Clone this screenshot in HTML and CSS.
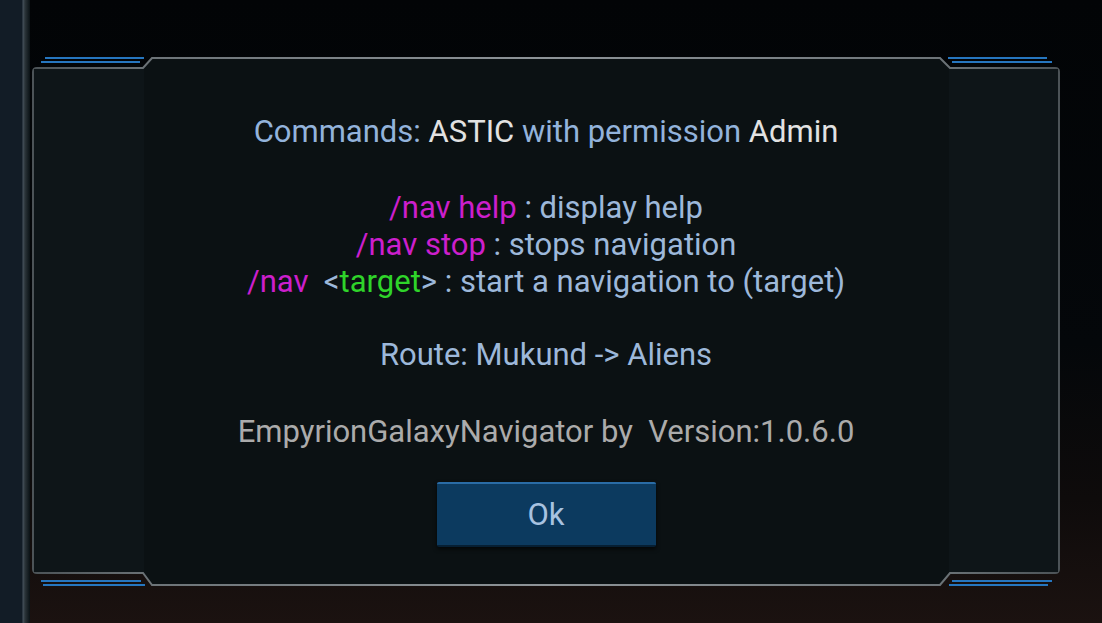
FILE: index.html
```html
<!DOCTYPE html>
<html lang="en">
<head>
  <meta charset="UTF-8">
  <title>Galaxy Navigator</title>
  <link rel="stylesheet" href="styles.css">
</head>
<body>

<div class="rail"></div>

<div class="stage">
  <div class="panel">
    <svg class="frame" width="1028" height="531" viewBox="0 0 1028 531">
      <defs>
        <linearGradient id="edge" x1="0" y1="0" x2="1" y2="0">
          <stop offset="0" stop-color="#4c5357"/>
          <stop offset="0.12" stop-color="#6d7478"/>
          <stop offset="0.5" stop-color="#8e9498"/>
          <stop offset="0.88" stop-color="#6d7478"/>
          <stop offset="1" stop-color="#4c5357"/>
        </linearGradient>
      </defs>
      <!-- body of the window -->
      <path d="M1,16 Q1,12 5,12 L111,12 L120,2 L908,2 L918,12 L1023,12 Q1027,12 1027,16 L1027,513 Q1027,517 1023,517 L918,517 L908,529 L120,529 L111,517 L5,517 Q1,517 1,513 Z"
            fill="#0b1113" stroke="url(#edge)" stroke-width="2"/>
      <!-- wings, a touch lighter -->
      <rect x="2" y="13" width="110" height="503" fill="#0e1518"/>
      <rect x="917" y="13" width="109" height="503" fill="#0e1518"/>
      <!-- blue trims -->
      <g stroke="#2676bf" stroke-width="2">
        <line x1="13" y1="2" x2="112" y2="2"/>
        <line x1="9" y1="6" x2="108" y2="6"/>
        <line x1="916" y1="2" x2="1015" y2="2"/>
        <line x1="920" y1="6" x2="1020" y2="6"/>
        <line x1="9" y1="525" x2="109" y2="525"/>
        <line x1="11" y1="529" x2="113" y2="529"/>
        <line x1="920" y1="525" x2="1020" y2="525"/>
        <line x1="917" y1="529" x2="1016" y2="529"/>
      </g>
    </svg>

    <div class="content">
      <p class="title"><span class="blue">Commands:</span> ASTIC <span class="blue">with permission</span> Admin</p>

      <div class="cmds">
        <p><span class="cmd">/nav help</span> : display help</p>
        <p><span class="cmd">/nav stop</span> : stops navigation</p>
        <p><span class="cmd">/nav</span>&nbsp;&nbsp;&lt;<span class="arg">target</span>&gt; : start a navigation to (target)</p>
      </div>

      <p class="route">Route: Mukund -&gt; Aliens</p>

      <p class="version">EmpyrionGalaxyNavigator by&nbsp; Version:1.0.6.0</p>

      <button class="ok">Ok</button>
    </div>
  </div>
</div>

</body>
</html>
```

FILE: styles.css
```css
html, body { height: 100%; }
body {
  margin: 0;
  display: flex;
  overflow: hidden;
  font-family: Roboto, "Noto Sans", sans-serif;
  background: linear-gradient(#020406 0%, #04070a 55%, #0e0b0b 80%, #1b1210 100%);
}

.rail {
  width: 30px;
  flex: none;
  background: linear-gradient(to right, #121c26 0, #121c26 22px, #44505a 23px, #2b3439 25px, #10181c 29px, #0a1114 30px);
}

.stage { flex: 1; padding: 56px 0 0 2px; }

.panel { position: relative; width: 1028px; height: 531px; }
.frame { position: absolute; left: 0; top: 0; }

.content {
  position: relative;
  padding-top: 57px;
  text-align: center;
  font-size: 31px;
  line-height: 37px;
  color: #9db8da;
}
.content p { margin: 0; }

.title { color: #e2e2e2; margin-bottom: 39px !important; }
.blue { color: #93b3db; }
.cmds { margin-bottom: 36px; }
.cmd { color: #cc1fcc; }
.arg { color: #2fd42a; }
.route { margin-bottom: 40px !important; }
.version { color: #ababab; }

.ok {
  display: block;
  margin: 32px auto 0;
  width: 219px;
  height: 65px;
  border: 0;
  border-top: 2px solid #2a6ca6;
  border-bottom: 2px solid #061f33;
  border-radius: 2px;
  background: #0c3a5f;
  box-shadow: 0 2px 4px rgba(0,0,0,0.7);
  font-family: Roboto, "Noto Sans", sans-serif;
  font-size: 31px;
  color: #a8c2e0;
}
```
